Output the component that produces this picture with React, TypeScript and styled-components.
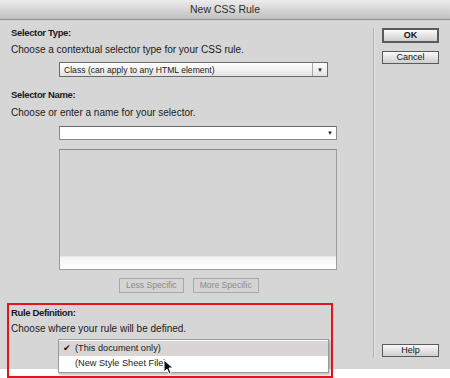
import styled, { createGlobalStyle } from 'styled-components';

// START: global
const GlobalStyle = createGlobalStyle`
    html, body {
        margin: 0;
        padding: 0;
        background: #ffffff;
    }
    body {
        font-family: "Liberation Sans", Arial, sans-serif;
        font-size: 10px;
        color: #1a1a1a;
    }
`;

// START: dialog
const App = () => {
    return (
        <Page>
            <GlobalStyle />
            <Dialog>
                <TitleBar>New CSS Rule</TitleBar>
                <Body>
                    <Main>
                        <Label>Selector Type:</Label>
                        <Hint $top={3}>Choose a contextual selector type for your CSS rule.</Hint>
                        <Select>
                            <span>Class (can apply to any HTML element)</span>
                            <SelectArrow>▼</SelectArrow>
                        </Select>
                        <Label $top={11}>Selector Name:</Label>
                        <Hint $top={4}>Choose or enter a name for your selector.</Hint>
                        <Combo>
                            <ComboArrow>▼</ComboArrow>
                        </Combo>
                        <ListBox>
                            <ScrollStrip />
                        </ListBox>
                        <SpecificRow>
                            <GhostButton>Less Specific</GhostButton>
                            <GhostButton>More Specific</GhostButton>
                        </SpecificRow>
                        <RuleSection>
                            <Label>Rule Definition:</Label>
                            <Hint $top={2}>Choose where your rule will be defined.</Hint>
                            <Menu>
                                <MenuItem $active>
                                    <Check>✔</Check>(This document only)
                                </MenuItem>
                                <MenuItem>
                                    <Check />(New Style Sheet File)
                                    <Pointer viewBox="0 0 10 16" width="10" height="16">
                                        <path d="M1 1 L1 13 L4 10 L6 15 L8 14 L6 9 L10 9 Z" fill="#111" stroke="#fff" strokeWidth="1" />
                                    </Pointer>
                                </MenuItem>
                            </Menu>
                        </RuleSection>
                    </Main>
                    <Divider />
                    <Side>
                        <SideGroup>
                            <PushButton $default>OK</PushButton>
                            <PushButton>Cancel</PushButton>
                        </SideGroup>
                        <PushButton>Help</PushButton>
                    </Side>
                </Body>
            </Dialog>
        </Page>
    );
};
export default App;

// START: styling
const Page = styled.div`
    width: 450px;
    height: 378px;
    overflow: hidden;
    background: #fff;
`;

const Dialog = styled.div`
    width: 450px;
    height: 369px;
    background: #d6d6d6;
    position: relative;
`;

const TitleBar = styled.div`
    height: 20px;
    box-sizing: border-box;
    border-bottom: 1px solid #8e8e8e;
    background: linear-gradient(#ececec, #d2d2d2 60%, #c0c0c0);
    text-align: center;
    font-size: 10.5px;
    line-height: 19px;
    color: #2e2e2e;
`;

const Body = styled.div`
    display: flex;
`;

const Main = styled.div`
    width: 373px;
    padding-top: 6px;
    display: flex;
    flex-direction: column;
`;

const Label = styled.div<{ $top?: number }>`
    margin: ${(p) => p.$top ?? 0}px 0 0 11px;
    height: 14px;
    line-height: 14px;
    font-weight: bold;
    font-size: 9.5px;
    letter-spacing: -0.35px;
`;

const Hint = styled.div<{ $top?: number }>`
    margin: ${(p) => p.$top ?? 0}px 0 0 11px;
    height: 14px;
    line-height: 14px;
`;

const Select = styled.div`
    margin: 5px 0 0 59px;
    width: 269px;
    height: 15px;
    box-sizing: border-box;
    border: 1px solid #6a6a6a;
    background: linear-gradient(#ffffff, #f2f2f2 50%, #e2e2e2);
    display: flex;
    align-items: center;
    justify-content: space-between;
    padding-left: 4px;
    font-size: 8.6px;
`;

const SelectArrow = styled.span`
    width: 14px;
    height: 100%;
    border-left: 1px solid #a8a8a8;
    font-size: 6px;
    display: flex;
    align-items: center;
    justify-content: center;
    color: #222;
`;

const Combo = styled.div`
    margin: 6px 0 0 59px;
    width: 278px;
    height: 14px;
    box-sizing: border-box;
    border: 1px solid #8a8a8a;
    border-top-color: #6a6a6a;
    background: #fff;
    position: relative;
`;

const ComboArrow = styled.span`
    position: absolute;
    right: 3px;
    top: 3px;
    font-size: 6px;
    color: #222;
`;

const ListBox = styled.div`
    margin: 9px 0 0 59px;
    width: 278px;
    height: 121px;
    box-sizing: border-box;
    border: 1px solid #9c9c9c;
    border-top-color: #8a8a8a;
    background: #d4d4d4;
    display: flex;
    flex-direction: column;
    justify-content: flex-end;
`;

const ScrollStrip = styled.div`
    height: 12px;
    background: linear-gradient(#f4f4f4, #ffffff);
    border-top: 1px solid #e8e8e8;
`;

const SpecificRow = styled.div`
    margin: 8px 0 0 119px;
    display: flex;
    gap: 9px;
`;

const GhostButton = styled.div`
    height: 15px;
    box-sizing: border-box;
    padding: 0 6px;
    border: 1px solid #a9a9a9;
    background: #d4d4d4;
    color: #8a8a8a;
    line-height: 13px;
    font-size: 8.6px;
`;

const RuleSection = styled.div`
    margin: 10px 0 0 7px;
    width: 326px;
    height: 75px;
    box-sizing: border-box;
    border: 2px solid #e2141c;
    padding-top: 1px;
    display: flex;
    flex-direction: column;

    ${Label}, ${Hint} {
        margin-left: 2px;
    }
`;

const Menu = styled.div`
    margin: 3px 0 0 49px;
    width: 271px;
    box-sizing: border-box;
    border: 1px solid #9a9a9a;
    background: #fff;
    box-shadow: 1px 2px 2px rgba(0, 0, 0, 0.25);
    padding: 1px 0;
`;

const MenuItem = styled.div<{ $active?: boolean }>`
    height: 15px;
    line-height: 15px;
    display: flex;
    align-items: center;
    position: relative;
    background: ${(p) => (p.$active ? '#d9d5d5' : '#ffffff')};
    font-size: 9.2px;
`;

const Check = styled.span`
    width: 16px;
    text-align: center;
    font-size: 9px;
`;

const Pointer = styled.svg`
    position: absolute;
    left: 104px;
    top: 3px;
`;

const Divider = styled.div`
    width: 1px;
    height: 330px;
    margin-top: 8px;
    background: #b0b0b0;
    border-right: 1px solid #e6e6e6;
`;

const Side = styled.div`
    margin: 8px 0 0 7px;
    height: 329px;
    display: flex;
    flex-direction: column;
    justify-content: space-between;
`;

const SideGroup = styled.div`
    display: flex;
    flex-direction: column;
    gap: 8px;
`;

const PushButton = styled.div<{ $default?: boolean }>`
    width: 57px;
    height: ${(p) => (p.$default ? 15 : 13)}px;
    box-sizing: border-box;
    border: ${(p) => (p.$default ? 2 : 1)}px solid #5a5a5a;
    background: linear-gradient(#fafafa, #e4e4e4 50%, #cfcfcf);
    text-align: center;
    line-height: 11px;
    font-size: 9px;
    font-weight: ${(p) => (p.$default ? 'bold' : 'normal')};
    color: #111;
`;
